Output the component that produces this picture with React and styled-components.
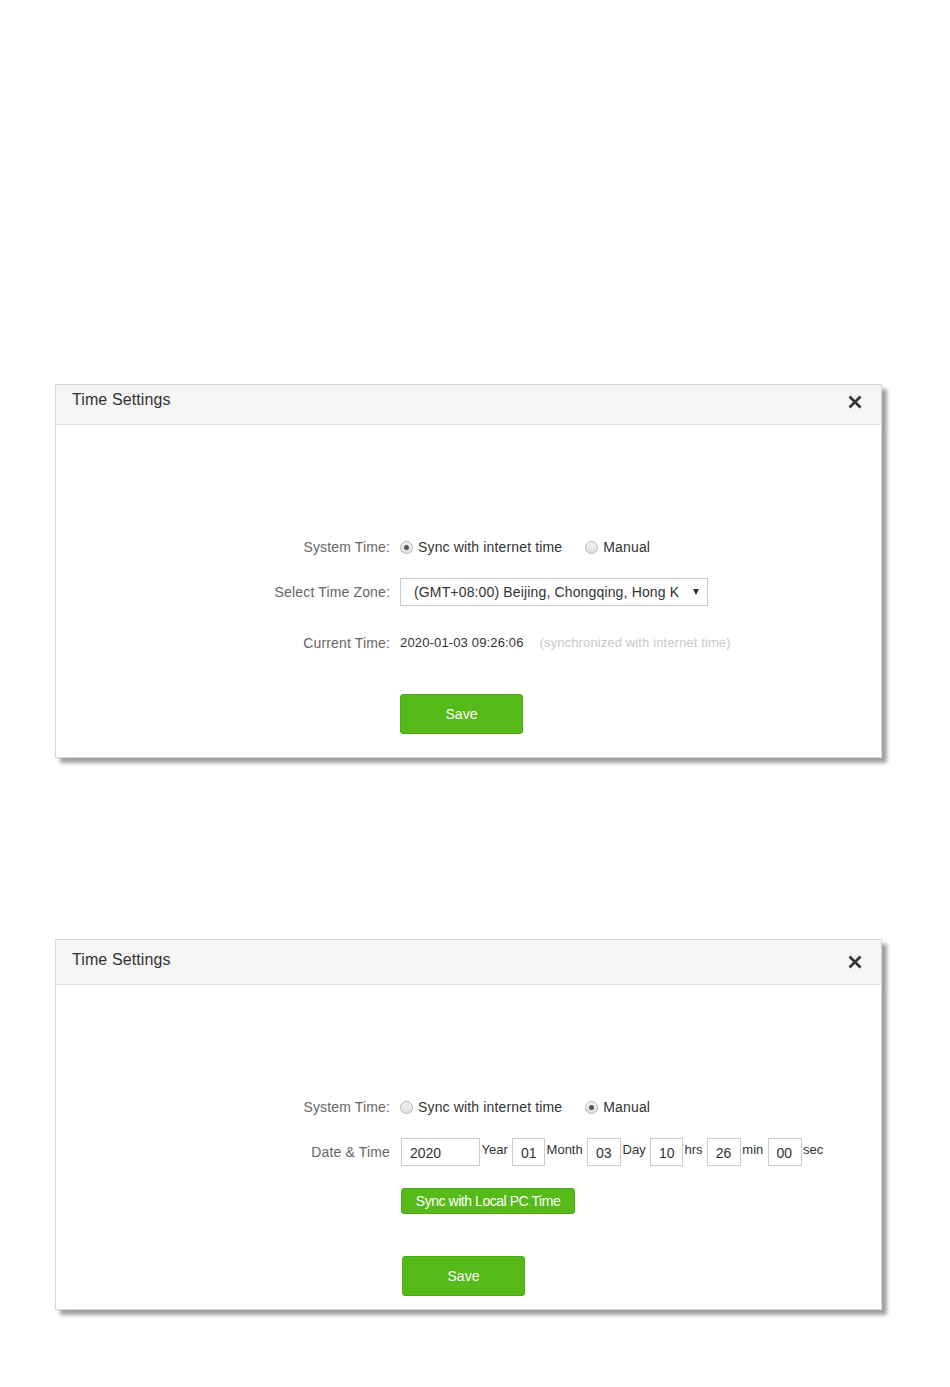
import React from "react";
import styled, { createGlobalStyle } from "styled-components";

const GlobalStyle = createGlobalStyle`
  html, body {
    margin: 0;
    padding: 0;
    background: #ffffff;
    font-family: "Liberation Sans", Arial, sans-serif;
  }
`;

const Page = styled.div`
  width: 950px;
  min-height: 1387px;
  box-sizing: border-box;
  padding: 384px 0 0 55px;
  display: flex;
  flex-direction: column;
  gap: 181px;
`;

const Panel = styled.div`
  width: 827px;
  box-sizing: border-box;
  border: 1px solid #d9d9d9;
  background: #ffffff;
  box-shadow: 5px 5px 4px rgba(0, 0, 0, 0.38);
`;

const Header = styled.div`
  height: ${(p) => p.$height}px;
  box-sizing: border-box;
  background: #f5f5f5;
  border-bottom: 1px solid #e3e3e3;
  display: flex;
  justify-content: space-between;
  align-items: flex-start;
  padding: ${(p) => p.$top}px 19px 0 16px;
`;

const Title = styled.h3`
  margin: 0;
  font-size: 16px;
  line-height: 20px;
  font-weight: normal;
  color: #333333;
  letter-spacing: 0.1px;
`;

const Close = styled.button`
  border: 0;
  background: none;
  padding: 0;
  margin-top: 5px;
  width: 14px;
  height: 14px;
  cursor: pointer;
  display: flex;
`;

const Body = styled.div`
  padding: 112px 0 ${(p) => p.$bottom}px 0;
  display: flex;
  flex-direction: column;
`;

const Row = styled.div`
  display: grid;
  grid-template-columns: 334px 1fr;
  column-gap: ${(p) => p.$gap || 10}px;
  align-items: center;
  margin-top: ${(p) => p.$mt || 0}px;
  min-height: 20px;
`;

const Label = styled.span`
  text-align: right;
  font-size: 14px;
  line-height: 20px;
  color: #666666;
  letter-spacing: 0.15px;
`;

const Controls = styled.div`
  display: flex;
  align-items: ${(p) => p.$align || "center"};
`;

const RadioOption = styled.label`
  display: flex;
  align-items: center;
  gap: 5px;
  font-size: 14px;
  line-height: 20px;
  color: #333333;
  letter-spacing: 0.15px;
  margin-right: ${(p) => p.$mr || 0}px;
`;

const RadioDot = styled.span`
  width: 11px;
  height: 11px;
  border-radius: 50%;
  border: 1px solid #b5b5b5;
  background: linear-gradient(#f3f3f3, #dedede);
  display: flex;
  align-items: center;
  justify-content: center;
  &::after {
    content: "";
    width: 5px;
    height: 5px;
    border-radius: 50%;
    background: ${(p) => (p.$checked ? "#555555" : "transparent")};
  }
`;

const SelectBox = styled.div`
  width: 308px;
  height: 28px;
  box-sizing: border-box;
  border: 1px solid #c9c9c9;
  display: flex;
  align-items: center;
  padding: 0 8px 0 13px;
  gap: 12px;
  font-size: 14px;
  color: #333333;
  letter-spacing: 0.15px;
`;

const SelectText = styled.span`
  flex: 1;
  white-space: nowrap;
`;

const Caret = styled.span`
  width: 0;
  height: 0;
  border-left: 3.5px solid transparent;
  border-right: 3.5px solid transparent;
  border-top: 6px solid #333333;
`;

const TimeValue = styled.span`
  font-size: 13px;
  line-height: 20px;
  color: #333333;
  letter-spacing: 0.15px;
  margin-right: 16px;
`;

const Hint = styled.span`
  font-size: 13px;
  line-height: 20px;
  color: #c8c8c8;
  letter-spacing: 0.12px;
`;

const Field = styled.input`
  width: ${(p) => p.$w}px;
  height: 28px;
  box-sizing: border-box;
  border: 1px solid #cccccc;
  padding: 2px 0 0 8px;
  font-family: "Liberation Sans", Arial, sans-serif;
  font-size: 14px;
  color: #333333;
  outline: none;
`;

const Unit = styled.span`
  font-size: 13px;
  line-height: 24px;
  color: #333333;
  margin: 0 4.3px 0 1.5px;
`;

const GreenButton = styled.button`
  width: ${(p) => p.$w}px;
  height: ${(p) => p.$h}px;
  background: #56bb19;
  border: 1px solid #4ea716;
  border-radius: 3px;
  color: #ffffff;
  font-family: "Liberation Sans", Arial, sans-serif;
  font-size: ${(p) => p.$fs || 14}px;
  letter-spacing: ${(p) => p.$ls || 0}px;
  white-space: nowrap;
  cursor: pointer;
  padding: 0;
`;

const CloseIcon = () => (
  <svg width="14" height="14" viewBox="0 0 14 14">
    <path d="M1.5 1.5 L12.5 12.5 M12.5 1.5 L1.5 12.5" stroke="#333" strokeWidth="2.6" strokeLinecap="butt" />
  </svg>
);

const Radio = ({ checked, children, mr }) => (
  <RadioOption $mr={mr}>
    <RadioDot $checked={checked} />
    {children}
  </RadioOption>
);

const SystemTimeRow = ({ manual }) => (
  <Row>
    <Label>System Time:</Label>
    <Controls>
      <Radio checked={!manual} mr={23}>Sync with internet time</Radio>
      <Radio checked={manual}>Manual</Radio>
    </Controls>
  </Row>
);

const dateParts = [
  { value: "2020", unit: "Year", w: 79 },
  { value: "01", unit: "Month", w: 33 },
  { value: "03", unit: "Day", w: 34 },
  { value: "10", unit: "hrs", w: 33 },
  { value: "26", unit: "min", w: 34 },
  { value: "00", unit: "sec", w: 34 },
];

export default function App() {
  return (
    <>
      <GlobalStyle />
      <Page>
        <Panel>
          <Header $height={40} $top={5}>
            <Title>Time Settings</Title>
            <Close aria-label="close"><CloseIcon /></Close>
          </Header>
          <Body $bottom={23}>
            <SystemTimeRow />
            <Row $mt={21}>
              <Label>Select Time Zone:</Label>
              <Controls>
                <SelectBox>
                  <SelectText>(GMT+08:00) Beijing, Chongqing, Hong K</SelectText>
                  <Caret />
                </SelectBox>
              </Controls>
            </Row>
            <Row $mt={27}>
              <Label>Current Time:</Label>
              <Controls>
                <TimeValue>2020-01-03 09:26:06</TimeValue>
                <Hint>(synchronized with internet time)</Hint>
              </Controls>
            </Row>
            <Row $mt={41}>
              <span />
              <Controls>
                <GreenButton $w={123} $h={40}>Save</GreenButton>
              </Controls>
            </Row>
          </Body>
        </Panel>

        <Panel>
          <Header $height={45} $top={10}>
            <Title>Time Settings</Title>
            <Close aria-label="close"><CloseIcon /></Close>
          </Header>
          <Body $bottom={13}>
            <SystemTimeRow manual />
            <Row $mt={21} $gap={11}>
              <Label>Date &amp; Time</Label>
              <Controls $align="flex-start">
                {dateParts.map((d) => (
                  <React.Fragment key={d.unit}>
                    <Field $w={d.w} defaultValue={d.value} readOnly />
                    <Unit>{d.unit}</Unit>
                  </React.Fragment>
                ))}
              </Controls>
            </Row>
            <Row $mt={22} $gap={11}>
              <span />
              <Controls>
                <GreenButton $w={174} $h={26} $fs={14} $ls={-0.45}>Sync with Local PC Time</GreenButton>
              </Controls>
            </Row>
            <Row $mt={42} $gap={12}>
              <span />
              <Controls>
                <GreenButton $w={123} $h={40}>Save</GreenButton>
              </Controls>
            </Row>
          </Body>
        </Panel>
      </Page>
    </>
  );
}
